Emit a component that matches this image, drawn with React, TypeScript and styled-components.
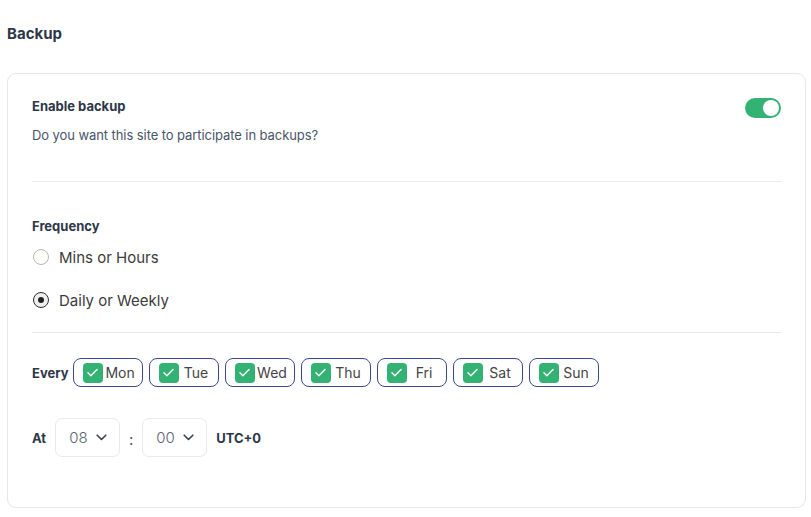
import React, { useState } from "react";
import styled, { createGlobalStyle } from "styled-components";

const Global = createGlobalStyle`
  html, body { margin: 0; padding: 0; background: #ffffff; }
  body { font-family: Inter, "Noto Sans", sans-serif; -webkit-font-smoothing: antialiased; }
  * { box-sizing: border-box; }
`;

const Page = styled.div`
  padding: 24px 5px 0 7px;
  width: 811px;
`;

const Title = styled.h2`
  margin: 0;
  font-size: 15px;
  line-height: 20px;
  font-weight: 700;
  color: #2d3748;
`;

const Card = styled.div`
  margin-top: 29px;
  width: 799px;
  border: 1px solid #e6e7ea;
  border-radius: 9px;
  padding: 23px 24px 50px 24px;
`;

const HeaderRow = styled.div`
  display: flex;
  justify-content: space-between;
  align-items: flex-start;
`;

const Label = styled.div`
  font-size: 13px;
  line-height: 18px;
  font-weight: 700;
  color: #2d3748;
`;

const Description = styled.div`
  margin-top: 11px;
  font-size: 13px;
  line-height: 18px;
  letter-spacing: -0.08px;
  color: #4a5568;
`;

const Toggle = styled.button<{ $on: boolean }>`
  margin-top: 1px;
  width: 36px;
  height: 20px;
  border: none;
  border-radius: 10px;
  padding: 2px;
  background: ${(p) => (p.$on ? "#34b274" : "#cbd5e0")};
  display: flex;
  justify-content: ${(p) => (p.$on ? "flex-end" : "flex-start")};
  cursor: pointer;
`;

const Knob = styled.span`
  width: 16px;
  height: 16px;
  border-radius: 50%;
  background: #ffffff;
`;

const Divider = styled.hr<{ $top: number }>`
  margin: ${(p) => p.$top}px 0 0 0;
  border: none;
  border-top: 1px solid #e8e9ec;
  height: 0;
`;

const SectionLabel = styled(Label)`
  margin-top: 35px;
`;

const RadioRow = styled.label<{ $gap: number }>`
  margin-top: ${(p) => p.$gap}px;
  display: flex;
  align-items: center;
  height: 24px;
  gap: 10px;
  padding-left: 1px;
  font-size: 15px;
  color: #3b3b3b;
  cursor: pointer;
`;

const RadioCircle = styled.span<{ $checked: boolean }>`
  width: 16px;
  height: 16px;
  border-radius: 50%;
  border: 1px solid ${(p) => (p.$checked ? "#2e2e2e" : "#b8b8ae")};
  background: ${(p) => (p.$checked ? "#efefef" : "#ffffff")};
  display: flex;
  align-items: center;
  justify-content: center;
  &::after {
    content: "";
    width: 6px;
    height: 6px;
    border-radius: 50%;
    background: ${(p) => (p.$checked ? "#1f1f1f" : "transparent")};
  }
`;

const InlineRow = styled.div<{ $top: number }>`
  margin-top: ${(p) => p.$top}px;
  display: flex;
  align-items: center;
`;

const RowLabel = styled.span<{ $mr: number }>`
  font-size: 13px;
  font-weight: 700;
  color: #2d3748;
  margin-right: ${(p) => p.$mr}px;
`;

const Chips = styled.div`
  display: flex;
  gap: 6px;
`;

const Chip = styled.label`
  width: 70px;
  height: 29px;
  border: 1px solid #3e4a8b;
  border-radius: 8px;
  display: flex;
  align-items: center;
  padding-left: 9px;
  cursor: pointer;
`;

const CheckBox = styled.span`
  width: 20px;
  height: 20px;
  border-radius: 4px;
  background: #34b274;
  display: flex;
  align-items: center;
  justify-content: center;
  flex-shrink: 0;
`;

const ChipText = styled.span`
  flex: 1;
  text-align: center;
  font-size: 14px;
  color: #444444;
  padding-right: 4px;
`;

const Select = styled.div`
  width: 65px;
  height: 39px;
  border: 1px solid #e8e9ec;
  border-radius: 7px;
  display: flex;
  align-items: center;
  padding-left: 13px;
  gap: 8px;
  font-size: 15px;
  font-weight: 300;
  color: #5b6372;
`;

const Colon = styled.span`
  width: 22px;
  text-align: center;
  font-size: 15px;
  color: #4a5568;
  padding-top: 3px;
`;

const Utc = styled.span`
  margin-left: 9px;
  font-size: 13px;
  font-weight: 700;
  color: #2d3748;
`;

const Check = () => (
  <svg width="13" height="13" viewBox="0 0 12 12" fill="none">
    <path d="M1.8 6.3l2.7 2.7L10.2 3.3" stroke="#fff" strokeWidth="1.3" strokeLinecap="round" strokeLinejoin="round" />
  </svg>
);

const Chevron = () => (
  <svg width="11" height="7" viewBox="0 0 11 7" fill="none">
    <path d="M1.2 1.2l4.3 4.3 4.3-4.3" stroke="#3a4150" strokeWidth="1.6" strokeLinecap="round" strokeLinejoin="round" />
  </svg>
);

const days = ["Mon", "Tue", "Wed", "Thu", "Fri", "Sat", "Sun"];

export default function App() {
  const [on, setOn] = useState(true);
  const [freq, setFreq] = useState("daily");
  return (
    <>
      <Global />
      <Page>
        <Title>Backup</Title>
        <Card>
          <HeaderRow>
            <div>
              <Label>Enable backup</Label>
              <Description>Do you want this site to participate in backups?</Description>
            </div>
            <Toggle $on={on} onClick={() => setOn(!on)} aria-label="Enable backup">
              <Knob />
            </Toggle>
          </HeaderRow>
          <Divider $top={37} />
          <SectionLabel>Frequency</SectionLabel>
          <RadioRow $gap={10} onClick={() => setFreq("mins")}>
            <RadioCircle $checked={freq === "mins"} />
            Mins or Hours
          </RadioRow>
          <RadioRow $gap={19} onClick={() => setFreq("daily")}>
            <RadioCircle $checked={freq === "daily"} />
            Daily or Weekly
          </RadioRow>
          <Divider $top={20} />
          <InlineRow $top={25}>
            <RowLabel $mr={4}>Every</RowLabel>
            <Chips>
              {days.map((d) => (
                <Chip key={d}>
                  <CheckBox>
                    <Check />
                  </CheckBox>
                  <ChipText>{d}</ChipText>
                </Chip>
              ))}
            </Chips>
          </InlineRow>
          <InlineRow $top={31}>
            <RowLabel $mr={9}>At</RowLabel>
            <Select>
              08 <Chevron />
            </Select>
            <Colon>:</Colon>
            <Select>
              00 <Chevron />
            </Select>
            <Utc>UTC+0</Utc>
          </InlineRow>
        </Card>
      </Page>
    </>
  );
}
